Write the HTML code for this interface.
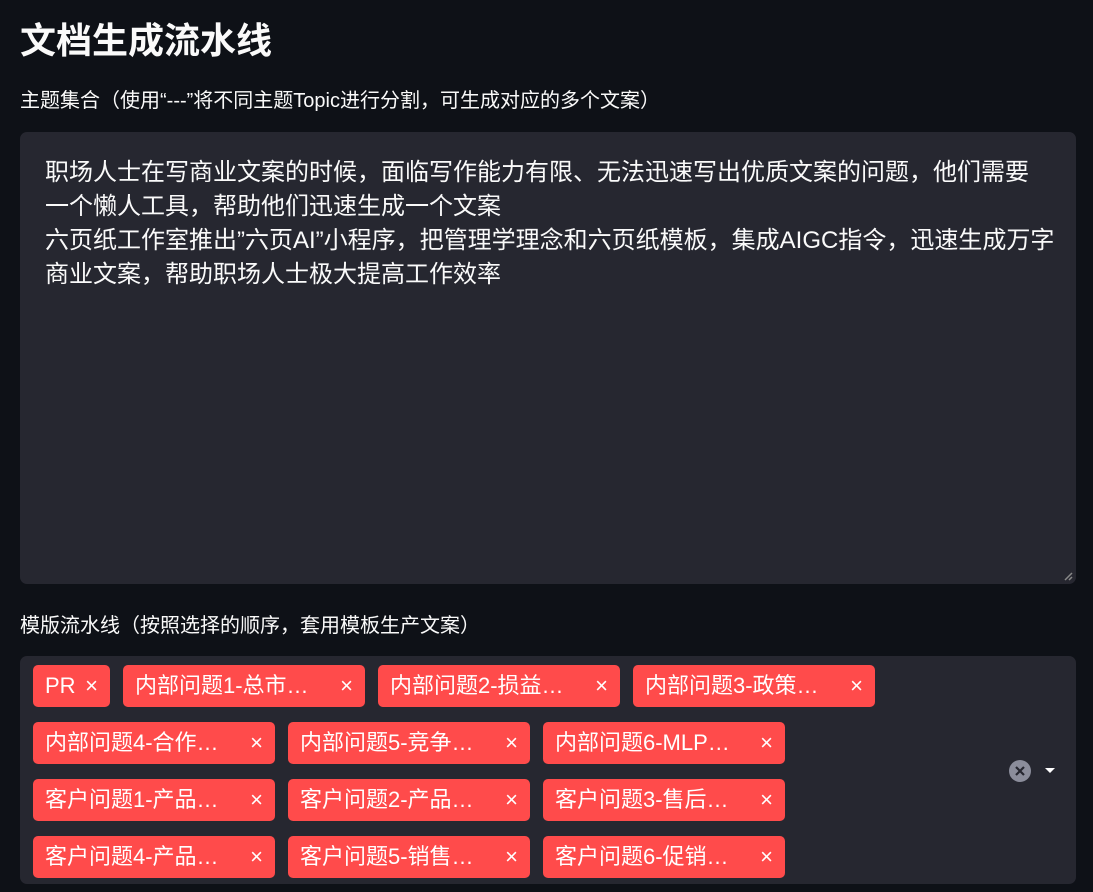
<!DOCTYPE html>
<html><head><meta charset="utf-8"><style>
body{margin:0;background:#0e1117;width:1093px;height:892px;overflow:hidden;font-family:"Liberation Sans","Noto Sans CJK SC",sans-serif;color:#fafafa}
h1{position:absolute;left:20px;top:16px;margin:0;font-size:36px;font-weight:700;line-height:50px}
.lbl{position:absolute;left:20px;font-size:20px;line-height:26px}
.ta{position:absolute;left:20px;top:132px;width:1056px;height:452px;background:#262730;border-radius:7px}
.ta div{position:absolute;left:25px;top:24px;width:1010px;font-size:24px;line-height:34px}
.ms{position:absolute;left:20px;top:656px;width:1056px;height:228px;background:#262730;border-radius:7px}
.tag{position:absolute;height:42px;background:#ff4b4b;border-radius:5px;font-size:22px;line-height:42px;color:#fff;box-sizing:border-box;padding-left:12px}
.tag span{position:absolute;right:12px;top:0;font-size:22px}
</style></head><body>
<h1>文档生成流水线</h1>
<div class="lbl" style="top:88px">主题集合（使用“---”将不同主题Topic进行分割，可生成对应的多个文案）</div>
<div class="ta"><div>职场人士在写商业文案的时候，面临写作能力有限、无法迅速写出优质文案的问题，他们需要<br>一个懒人工具，帮助他们迅速生成一个文案<br>六页纸工作室推出”六页AI”小程序，把管理学理念和六页纸模板，集成AIGC指令，迅速生成万字<br>商业文案，帮助职场人士极大提高工作效率</div>
<svg style="position:absolute;right:3px;bottom:3px" width="10" height="10"><path d="M9 2L2 9M9 6L6 9" stroke="#888" stroke-width="1.5"/></svg></div>
<div class="lbl" style="top:613px">模版流水线（按照选择的顺序，套用模板生产文案）</div>
<div class="ms"></div>
<div class="tag" style="left:33px;top:665px;width:77px">PR<span>×</span></div>
<div class="tag" style="left:123px;top:665px;width:242px">内部问题1-总市…<span>×</span></div>
<div class="tag" style="left:378px;top:665px;width:242px">内部问题2-损益…<span>×</span></div>
<div class="tag" style="left:633px;top:665px;width:242px">内部问题3-政策…<span>×</span></div>
<div class="tag" style="left:33px;top:722px;width:242px">内部问题4-合作…<span>×</span></div>
<div class="tag" style="left:288px;top:722px;width:242px">内部问题5-竞争…<span>×</span></div>
<div class="tag" style="left:543px;top:722px;width:242px">内部问题6-MLP…<span>×</span></div>
<div class="tag" style="left:33px;top:779px;width:242px">客户问题1-产品…<span>×</span></div>
<div class="tag" style="left:288px;top:779px;width:242px">客户问题2-产品…<span>×</span></div>
<div class="tag" style="left:543px;top:779px;width:242px">客户问题3-售后…<span>×</span></div>
<div class="tag" style="left:33px;top:836px;width:242px">客户问题4-产品…<span>×</span></div>
<div class="tag" style="left:288px;top:836px;width:242px">客户问题5-销售…<span>×</span></div>
<div class="tag" style="left:543px;top:836px;width:242px">客户问题6-促销…<span>×</span></div>
<svg style="position:absolute;left:1009px;top:760px" width="52" height="24"><circle cx="11" cy="11" r="11" fill="#8b8d9b"/><path d="M7 7L15 15M15 7L7 15" stroke="#262730" stroke-width="2.2"/><path d="M36 8L46 8L41 13Z" fill="#fff"/></svg>
</body></html>
